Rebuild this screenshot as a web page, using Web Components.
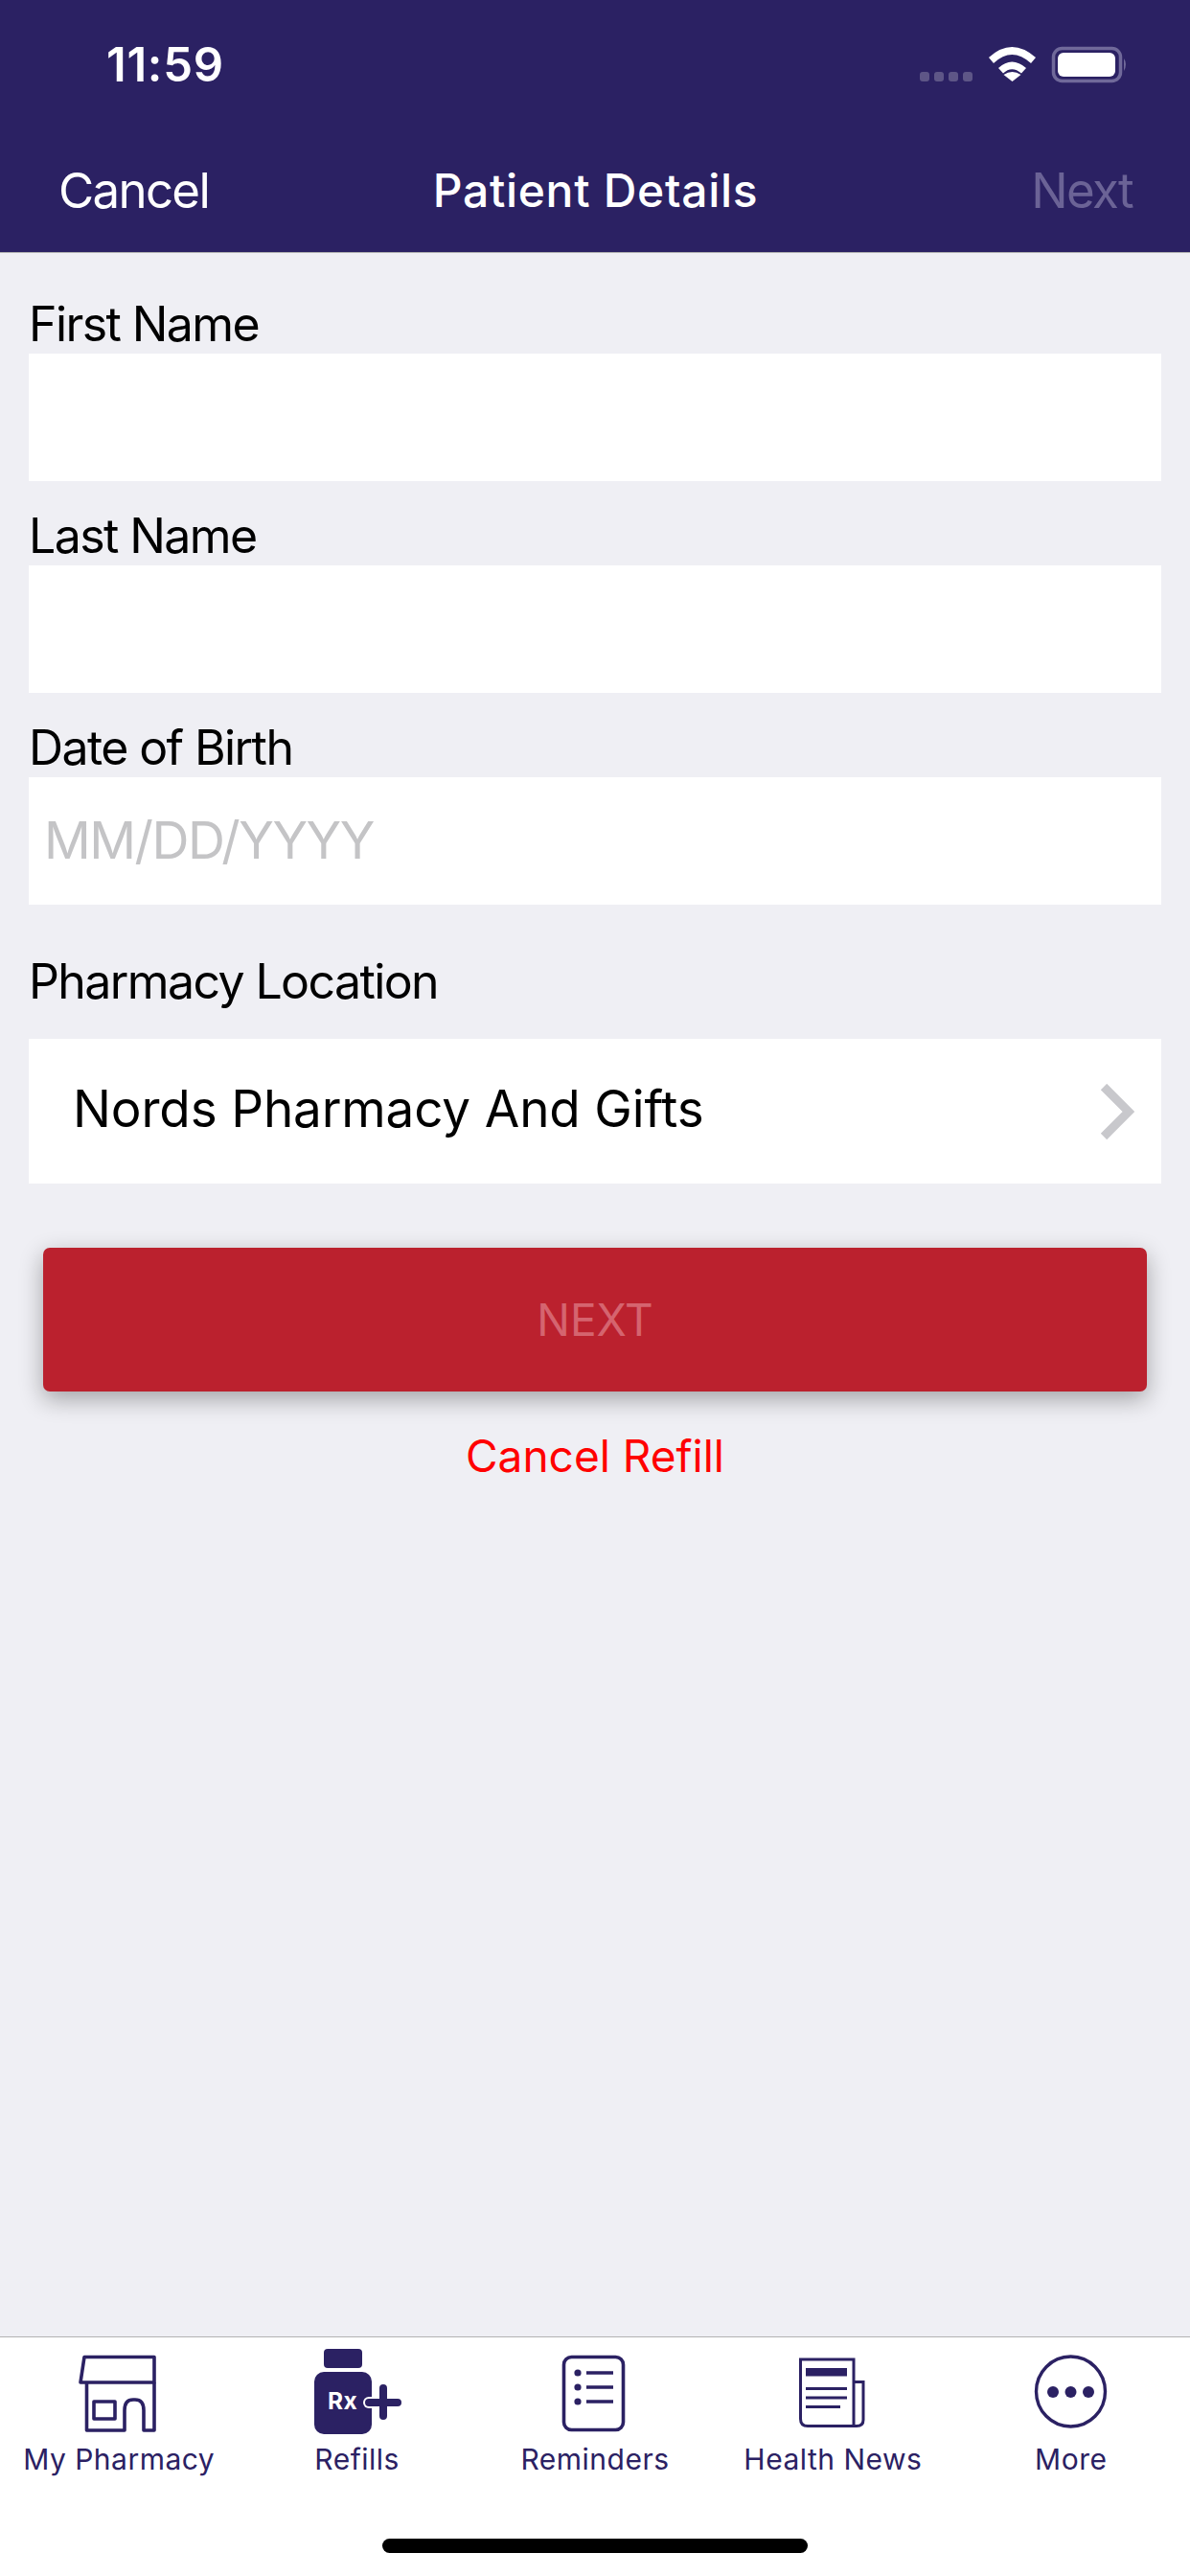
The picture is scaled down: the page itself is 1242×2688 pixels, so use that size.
<!DOCTYPE html>
<html lang="en"><head><meta charset="utf-8"><title>Patient Details</title>
<style>
html,body{margin:0;padding:0;width:1242px;height:2688px;overflow:hidden;background:#efeff4;font-family:Inter,"Liberation Sans",sans-serif}
app-screen{width:1242px;height:2688px}
</style></head><body>
<app-screen>
  <status-bar slot="top" time="11:59"></status-bar>
  <nav-bar slot="top" left="Cancel" title="Patient Details" right="Next"></nav-bar>
  <form-field label="First Name"></form-field>
  <form-field label="Last Name"></form-field>
  <form-field label="Date of Birth" placeholder="MM/DD/YYYY"></form-field>
  <picker-row label="Pharmacy Location" value="Nords Pharmacy And Gifts"></picker-row>
  <primary-button>NEXT</primary-button>
  <text-link>Cancel Refill</text-link>
  <tab-bar slot="bottom">
    <tab-item label="My Pharmacy"><svg viewBox="74 2448 100 96" width="100" height="96" fill="none" stroke="#2b2163" stroke-width="3.6" stroke-linejoin="round"><path d="M88 2459.5H161V2486H84Z"/><path d="M90.5 2486V2536H130V2515Q130 2504 139 2504H141Q150 2504 150 2515V2536H161V2486"/><rect x="98" y="2506" width="22" height="18"/></svg></tab-item>
    <tab-item label="Refills"><svg viewBox="323 2448 100 96" width="100" height="96"><rect x="338" y="2451" width="40" height="20" rx="4" fill="#2b2163"/><rect x="328" y="2475" width="60" height="65" rx="10" fill="#2b2163"/><text x="342" y="2514" font-family="Inter,'Liberation Sans',sans-serif" font-size="24.5" font-weight="700" fill="#fff">Rx</text><path d="M385 2507H415" stroke="#fff" stroke-width="12" stroke-linecap="round"/><path d="M385 2507H415M400 2492V2521" stroke="#2b2163" stroke-width="8" stroke-linecap="round"/></svg></tab-item>
    <tab-item label="Reminders"><svg viewBox="571 2448 100 96" width="100" height="96" fill="none" stroke="#2b2163"><rect x="588.5" y="2459.5" width="62" height="76" rx="8" stroke-width="3.6"/><path d="M612 2476H640M612 2491H640M612 2506H640" stroke-width="3.6"/><circle cx="603" cy="2476" r="3.6" fill="#2b2163" stroke="none"/><circle cx="603" cy="2491" r="3.6" fill="#2b2163" stroke="none"/><circle cx="603" cy="2506" r="3.6" fill="#2b2163" stroke="none"/></svg></tab-item>
    <tab-item label="Health News"><svg viewBox="819 2448 100 96" width="100" height="96" fill="none" stroke="#2b2163" stroke-width="3"><path d="M835.5 2462H891V2531.5H843Q835.5 2531.5 835.5 2524Z"/><path d="M891 2485.5H901V2525Q901 2531.5 894 2531.5H891"/><rect x="841" y="2471" width="43" height="8.5" fill="#2b2163" stroke="none"/><path d="M841 2492.5H884M841 2502H884M841 2511.5H877"/></svg></tab-item>
    <tab-item label="More"><svg viewBox="1067 2448 100 96" width="100" height="96" fill="none" stroke="#2b2163" stroke-width="3.4"><ellipse cx="1116.5" cy="2495.5" rx="36" ry="36.5"/><g fill="#2b2163" stroke="none"><circle cx="1098" cy="2496" r="6"/><circle cx="1116.5" cy="2496" r="6"/><circle cx="1135" cy="2496" r="6"/></g></svg></tab-item>
  </tab-bar>
</app-screen>
<script>
const def=(name,css,html)=>{customElements.define(name,class extends HTMLElement{
  connectedCallback(){if(this.shadowRoot)return;const r=this.attachShadow({mode:"open"});
    const a=n=>this.getAttribute(n)||"";r.innerHTML=`<style>${css}</style>${html(a)}`;}
});};
def("app-screen",`:host{display:flex;flex-direction:column;background:#efeff4;color:#000;font-family:Inter,"Liberation Sans",sans-serif}
  main{flex:1;display:flex;flex-direction:column;padding:17px 30px 0}`,
  ()=>`<slot name="top"></slot><main><slot></slot></main><slot name="bottom"></slot>`);
def("status-bar",`:host{display:flex;height:132px;box-sizing:border-box;background:#2b2163;color:#fff;padding:0 62px 0 111px;justify-content:space-between;align-items:flex-start}
  .t{font:600 49px/1 Inter,"Liberation Sans",sans-serif;margin-top:43px;letter-spacing:.7px}
  svg{margin-top:48px;display:block}`,
  a=>`<span class="t">${a("time")}</span><svg width="220" height="40" viewBox="960 48 220 40"><g fill="#5e5687"><rect x="960" y="75" width="10" height="10" rx="3"/><rect x="975" y="75" width="10" height="10" rx="3"/><rect x="990" y="75" width="10" height="10" rx="3"/><rect x="1005" y="75" width="10" height="10" rx="3"/></g><g fill="#fff"><path d="M1032 60Q1056 38 1081 60L1076 66Q1056 48 1037 66Z"/><path d="M1042 71Q1056 58 1071 71L1066 76.500Q1056 68 1047 76.500Z"/><path d="M1056.500 85L1047.500 78Q1056.500 72 1065.500 78Z"/></g><rect x="1099.500" y="50.500" width="70" height="34" rx="9" fill="none" stroke="#70699a" stroke-width="3.500"/><rect x="1104" y="55" width="60" height="25" rx="6" fill="#fff"/><path d="M1173 61Q1177 67 1173 74Z" fill="#70699a"/></svg>`);
def("nav-bar",`:host{display:grid;grid-template-columns:1fr auto 1fr;height:132px;box-sizing:border-box;background:#2b2163;color:#fff;padding:2px 60px 0 61px;align-items:center;border-bottom:1px solid #b2b2b2;font:400 51px/1 Inter,"Liberation Sans",sans-serif;letter-spacing:-1.7px}
  .c{font-weight:500;font-size:48px;letter-spacing:.7px}.r{text-align:right;color:#6b6396}`,
  a=>`<span>${a("left")}</span><span class="c">${a("title")}</span><span class="r">${a("right")}</span>`);
def("form-field",`:host{display:block;height:221px;box-sizing:border-box}
  label{display:block;height:88px;box-sizing:border-box;padding-top:31px;font:400 50px/52px Inter,"Liberation Sans",sans-serif;letter-spacing:-1.6px}
  .i{height:133px;background:#fff;box-sizing:border-box;padding:0 16px 2px;display:flex;align-items:center;font:400 54px/1 Inter,"Liberation Sans",sans-serif;color:#c4c4c6;letter-spacing:-1.5px}`,
  a=>`<label>${a("label")}</label><div class="i">${a("placeholder")}</div>`);
def("picker-row",`:host{display:block;margin-top:-3px}
  label{display:block;height:143px;box-sizing:border-box;padding-top:57px;font:400 50px/52px Inter,"Liberation Sans",sans-serif;letter-spacing:-1.6px}
  .r{height:151px;background:#fff;box-sizing:border-box;padding:0 28px 0 46px;display:flex;align-items:center;justify-content:space-between;font:400 53px/1 Inter,"Liberation Sans",sans-serif;letter-spacing:-.15px}
  span{position:relative;top:-2px}
  svg{display:block}`,
  a=>`<label>${a("label")}</label><div class="r"><span>${a("value")}</span><svg width="36" height="58" viewBox="0 0 36 58" fill="none" stroke="#c8c8cc" stroke-width="9"><path d="M4 3L30 29L4 55"/></svg></div>`);
def("primary-button",`:host{display:flex;margin:67px 15px 0;height:150px;background:#bb212e;border-radius:7px;box-shadow:0 8px 24px rgba(0,0,0,.32);align-items:center;justify-content:center;color:#d5646f;font:400 46px/1 Inter,"Liberation Sans",sans-serif}`,
  ()=>`<slot></slot>`);
def("text-link",`:host{display:block;text-align:center;margin-top:39px;color:#f00;font:400 46px/56px Inter,"Liberation Sans",sans-serif}`,
  ()=>`<slot></slot>`);
def("tab-bar",`:host{display:grid;grid-template-columns:repeat(5,1fr);height:250px;box-sizing:border-box;background:#fff;border-top:1px solid #b2b2b2;position:relative;padding-top:9px;align-items:start}
  i{position:absolute;left:399px;top:210px;width:444px;height:15px;border-radius:8px;background:#000}`,
  ()=>`<slot></slot><i></i>`);
def("tab-item",`:host{display:flex;flex-direction:column;align-items:center;color:#2b2163;font:400 30px/38px Inter,"Liberation Sans",sans-serif;letter-spacing:.5px}
  span{margin-top:3px;white-space:nowrap}::slotted(svg){display:block}`,
  a=>`<slot></slot><span>${a("label")}</span>`);
</script>
</body></html>
